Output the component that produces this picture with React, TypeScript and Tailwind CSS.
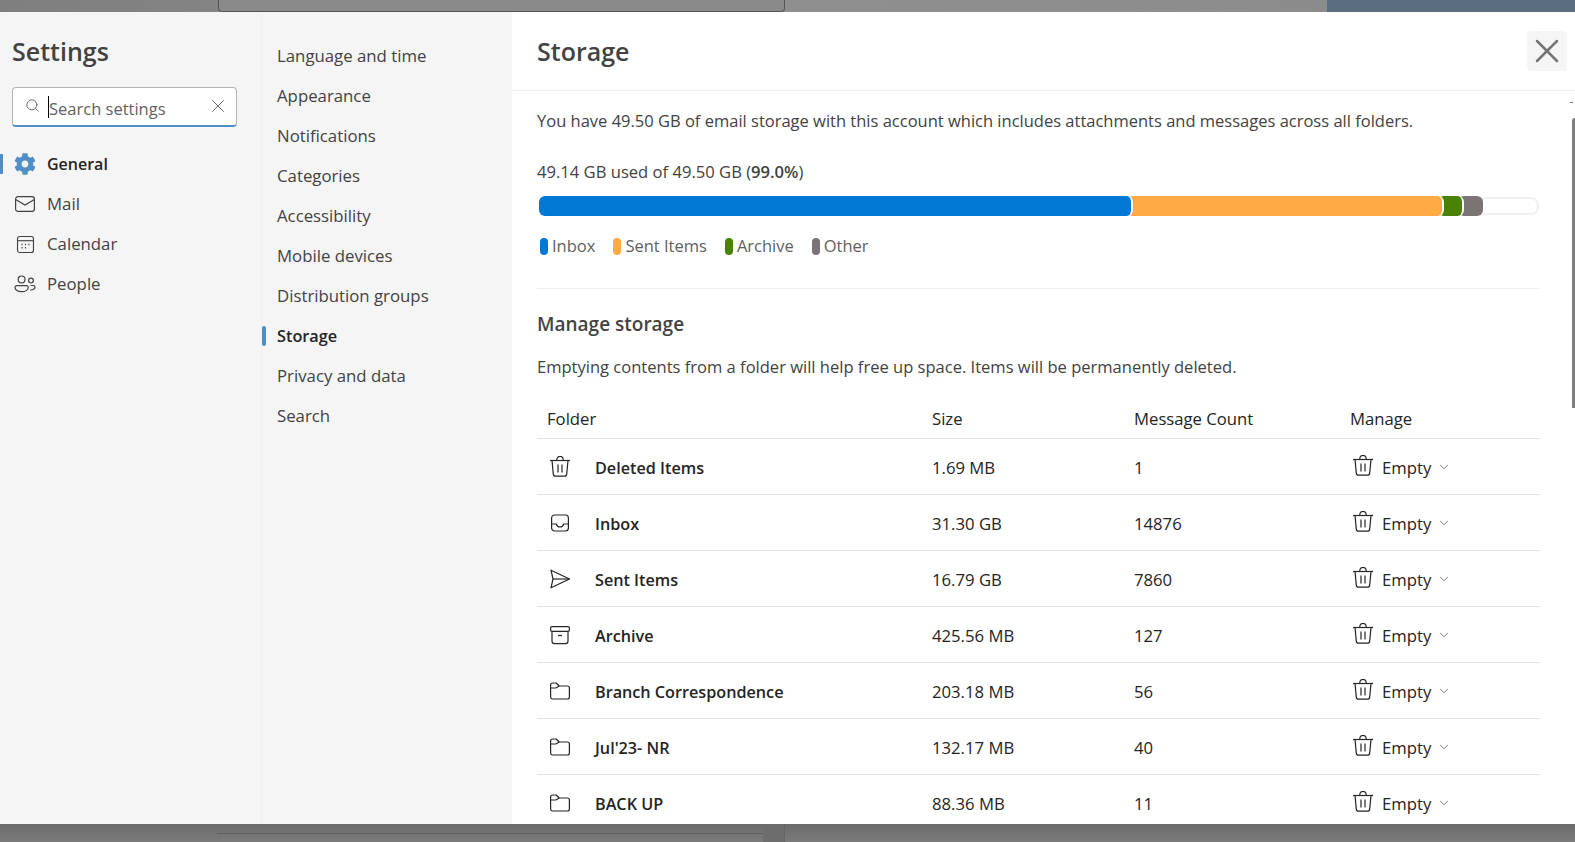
import { FaCog } from "react-icons/fa"
import { ChevronDown, Search, X } from "lucide-react"

const font = "font-['Open_Sans',sans-serif]"

const TrashIcon = ({ className = "" }: { className?: string }) => (
    <svg viewBox="0 0 22 22" className={className} fill="none" stroke="#242424" strokeWidth="1.2">
        <path d="M1 4.5h20" />
        <path d="M7.8 4.5V3.6a3.2 3.2 0 0 1 6.4 0v.9" />
        <path d="M3 4.5l1.300 13.600a2.400 2.400 0 0 0 2.400 2.100h8.600a2.400 2.400 0 0 0 2.400-2.100L19 4.500" />
        <path d="M9 8.500v8M13 8.500v8" />
    </svg>
)

const InboxIcon = () => (
    <svg viewBox="0 0 22 22" className="w-[22px] h-[22px]" fill="none" stroke="#242424" strokeWidth="1.2">
        <rect x="2.6" y="3" width="16.8" height="16" rx="3" />
        <path d="M2.6 12h4.600c.6 2 2 3 3.800 3s3.200-1 3.800-3h4.600" />
    </svg>
)

const SentIcon = () => (
    <svg viewBox="0 0 22 22" className="w-[22px] h-[22px]" fill="none" stroke="#242424" strokeWidth="1.2" strokeLinejoin="round">
        <path d="M2 2.200L20.500 11 2 19.800 4 11z" />
        <path d="M4 11h16.500" />
    </svg>
)

const ArchiveIcon = () => (
    <svg viewBox="0 0 22 22" className="w-[22px] h-[22px]" fill="none" stroke="#242424" strokeWidth="1.2">
        <rect x="1.6" y="2.6" width="18.8" height="4.8" rx="1.4" />
        <path d="M3 7.400v9.600a2.600 2.600 0 0 0 2.600 2.600h10.800A2.600 2.600 0 0 0 19 17V7.400" />
        <path d="M9 11.500h4" />
    </svg>
)

const FolderIcon = () => (
    <svg viewBox="0 0 22 22" className="w-[22px] h-[22px]" fill="none" stroke="#242424" strokeWidth="1.2" strokeLinejoin="round">
        <path d="M1.600 5a2 2 0 0 1 2-2h3.600l3 3h8.200a2 2 0 0 1 2 2v9a2 2 0 0 1-2 2H3.600a2 2 0 0 1-2-2z" />
        <path d="M1.600 8h5.200l3.400-2" />
    </svg>
)

const MailIcon = () => (
    <svg viewBox="0 0 22 18" className="w-[22px] h-[18px]" fill="none" stroke="#424242" strokeWidth="1.2">
        <rect x="1.6" y="1.6" width="18.8" height="14.8" rx="2.4" />
        <path d="M1.600 4.600L11 10l9.400-5.400" />
    </svg>
)

const CalendarIcon = () => (
    <svg viewBox="0 0 20 20" className="w-[19px] h-[19px]" fill="none" stroke="#424242" strokeWidth="1.2">
        <rect x="1.6" y="1.6" width="16.8" height="16.8" rx="2.4" />
        <path d="M1.600 6h16.800" />
        <path d="M5.800 10h1.200M9.400 10h1.200M13 10h1.200M5.800 13.400h1.200M9.400 13.400h1.200" strokeWidth="1.6" />
    </svg>
)

const PeopleIcon = () => (
    <svg viewBox="0 0 22 18" className="w-[22px] h-[18px]" fill="none" stroke="#424242" strokeWidth="1.2">
        <circle cx="7.6" cy="4.4" r="3.4" />
        <circle cx="17" cy="5.6" r="2.4" />
        <path d="M1 12.400a1.800 1.800 0 0 1 1.800-1.800h9.600a1.800 1.800 0 0 1 1.800 1.800c0 2.400-2.800 4.200-6.600 4.200S1 14.800 1 12.400z" />
        <path d="M16 15c3 .2 5-1 5-3a1.500 1.500 0 0 0-1.500-1.500h-2.900" />
    </svg>
)

const generalItems = [
    { label: "General", active: true, icon: <FaCog className="w-[22px] h-[22px] text-[#4f8fc6]" /> },
    { label: "Mail", active: false, icon: <MailIcon /> },
    { label: "Calendar", active: false, icon: <CalendarIcon /> },
    { label: "People", active: false, icon: <PeopleIcon /> },
]

const subItems = ["Language and time", "Appearance", "Notifications", "Categories", "Accessibility", "Mobile devices", "Distribution groups", "Storage", "Privacy and data", "Search"]

const legend = [
    { label: "Inbox", color: "bg-[#0078d4]" },
    { label: "Sent Items", color: "bg-[#ffaa44]" },
    { label: "Archive", color: "bg-[#498205]" },
    { label: "Other", color: "bg-[#7a7574]" },
]

const rows = [
    { name: "Deleted Items", size: "1.69 MB", count: "1", icon: <TrashIcon className="w-[22px] h-[22px]" /> },
    { name: "Inbox", size: "31.30 GB", count: "14876", icon: <InboxIcon /> },
    { name: "Sent Items", size: "16.79 GB", count: "7860", icon: <SentIcon /> },
    { name: "Archive", size: "425.56 MB", count: "127", icon: <ArchiveIcon /> },
    { name: "Branch Correspondence", size: "203.18 MB", count: "56", icon: <FolderIcon /> },
    { name: "Jul'23- NR", size: "132.17 MB", count: "40", icon: <FolderIcon /> },
    { name: "BACK UP", size: "88.36 MB", count: "11", icon: <FolderIcon /> },
]

export default function App() {
    return (
        <div className={`${font} h-[842px] w-[1575px] overflow-hidden flex flex-col bg-[#7c7c7c] text-[16.8px] text-[#424242]`}>
            {/* Dimmed page behind the dialog */}
            <div className="h-3 flex bg-gradient-to-r from-[#7f7f7f] via-[#8f8f8f] to-[#8a8a8a]">
                <div className="w-[218px]" />
                <div className="w-[567px] bg-[#8a8a8a] border-b border-x border-[#555] rounded-b" />
                <div className="w-[542px]" />
                <div className="flex-1 bg-[#5a6e80]" />
            </div>

            <div className="h-[812px] flex bg-white">
                {/* Settings column */}
                <div className="w-[262px] bg-[#f5f5f5] pt-[23px] border-r border-[#f0f0f0]">
                    <h1 className="ml-3 text-[25px] leading-[32px] font-semibold text-[#424242]">Settings</h1>
                    <div className="ml-3 mt-[20px] w-[225px] h-10 bg-white border border-[#b3b3b3] border-b-2 border-b-[#4f8fc6] rounded flex items-center pl-3 pr-[7px]">
                        <Search className="w-[15px] h-[15px] text-[#616161] mr-2 mb-[2px]" strokeWidth={1.5} />
                        <span className="w-px h-[22px] bg-black" />
                        <span className="flex-1 pt-[6px] text-[16.5px] text-[#616161]">Search settings</span>
                        <X className="w-[22px] h-[22px] mb-[2px] text-[#616161]" strokeWidth={1} />
                    </div>
                    <div className="mt-[17px]">
                        {generalItems.map((item) => (
                            <div key={item.label} className="relative h-10 flex items-center">
                                {item.active && <span className="absolute left-0 top-[10px] w-[3px] h-5 bg-[#4f8fc6]" />}
                                <span className="w-[47px] flex justify-center pl-[3px]">{item.icon}</span>
                                <span className={item.active ? "text-[16px] font-semibold text-[#242424]" : ""}>{item.label}</span>
                            </div>
                        ))}
                    </div>
                </div>

                {/* Sub menu column */}
                <div className="w-[250px] bg-[#f5f5f5] pt-6">
                    {subItems.map((item) => (
                        <div key={item} className="relative h-10 flex items-center pl-[15px]">
                            {item === "Storage" && <span className="absolute left-0 top-[10px] w-[4px] h-5 bg-[#4f8fc6] rounded-sm" />}
                            <span className={item === "Storage" ? "text-[16.3px] font-semibold text-[#242424]" : ""}>{item}</span>
                        </div>
                    ))}
                </div>

                {/* Storage panel */}
                <div className="flex-1 min-w-0 flex flex-col relative">
                    <div className="h-[79px] flex items-start justify-between border-b border-[#eeeeee] pl-[25px] pr-2 shrink-0">
                        <h2 className="mt-[23px] text-[25px] leading-[32px] font-semibold">Storage</h2>
                        <button className="mt-[19px] w-10 h-10 rounded bg-[#f5f5f5] flex items-center justify-center">
                            <X className="w-10 h-10 text-[#757575]" strokeWidth={1.5} />
                        </button>
                    </div>

                    <div className="pl-[25px] pr-[35px] overflow-hidden flex-1 text-[16.5px]">
                        <p className="mt-[18px] leading-6">You have 49.50 GB of email storage with this account which includes attachments and messages across all folders.</p>
                        <p className="mt-[27px] leading-6 text-[16.6px]">49.14 GB used of 49.50 GB (<b className="font-semibold">99.0%</b>)</p>

                        <div className="mt-[12px] ml-[2px] mr-px h-5 flex">
                            <div className="relative z-40 w-[594px] bg-[#0078d4] rounded-md border-r-2 border-white" />
                            <div className="relative z-30 w-[317px] -ml-[6px] bg-[#ffaa44] rounded-md border-r-2 border-white" />
                            <div className="relative z-20 w-[26px] -ml-[6px] bg-[#498205] rounded-md border-r-2 border-white" />
                            <div className="relative z-10 w-[25px] -ml-[6px] bg-[#7a7574] rounded-md" />
                            <div className="flex-1 -ml-[6px] my-px border-2 border-[#f0f0f0] rounded-lg" />
                        </div>

                        <div className="mt-[18px] ml-[3px] h-6 flex items-center gap-[18px]">
                            {legend.map((item) => (
                                <div key={item.label} className="flex items-center gap-[4px]">
                                    <span className={`w-2 h-[17px] rounded ${item.color}`} />
                                    <span className="text-[#616161]">{item.label}</span>
                                </div>
                            ))}
                        </div>

                        <div className="mt-[30px] border-t border-[#f0f0f0]" />
                        <h3 className="mt-[21px] text-[19px] leading-7 font-semibold">Manage storage</h3>
                        <p className="mt-[17px] leading-6 text-[16.55px]">Emptying contents from a folder will help free up space. Items will be permanently deleted.</p>

                        <div className="mt-[20px] flex h-[40px] items-center border-b border-[#e0e0e0] text-[#242424] text-[16.7px]">
                            <span className="w-[395px] pl-[10px]">Folder</span>
                            <span className="w-[202px]">Size</span>
                            <span className="w-[216px]">Message Count</span>
                            <span>Manage</span>
                        </div>
                        {rows.map((row) => (
                            <div key={row.name} className="flex h-[56px] shrink-0 items-center border-b border-[#e0e0e0] text-[#242424] text-[16.7px]">
                                <span className="w-[58px] pl-[12px]">{row.icon}</span>
                                <span className="w-[337px] pt-[3px] text-[16.2px] font-semibold">{row.name}</span>
                                <span className="w-[202px] pt-[2px]">{row.size}</span>
                                <span className="w-[216px] pt-[2px]">{row.count}</span>
                                <span className="flex items-center">
                                    <TrashIcon className="w-[22px] h-[22px] ml-[2px] mr-[8px]" />
                                    <span className="pt-[2px]">Empty</span>
                                    <ChevronDown className="w-[14px] h-[14px] mt-[2px] ml-[6px] text-[#616161]" strokeWidth={1.5} />
                                </span>
                            </div>
                        ))}
                    </div>

                    {/* Scrollbar */}
                    <div className="absolute right-[2px] top-[90px] w-[3px] h-px bg-[#777]" />
                    <div className="absolute right-0 top-[106px] w-[3px] h-[290px] bg-[#7d7d7d] rounded-tl" />
                </div>
            </div>

            <div className="flex-1 flex bg-gradient-to-b from-[#6b6b6b] to-[#7b7b7b]">
                <div className="w-[217px]" />
                <div className="w-[546px] h-[10px] border-b border-[#5f5f5f]" />
                <div className="w-[22px] bg-[#6d6d6d] border-r border-[#666]" />
            </div>
        </div>
    )
}
